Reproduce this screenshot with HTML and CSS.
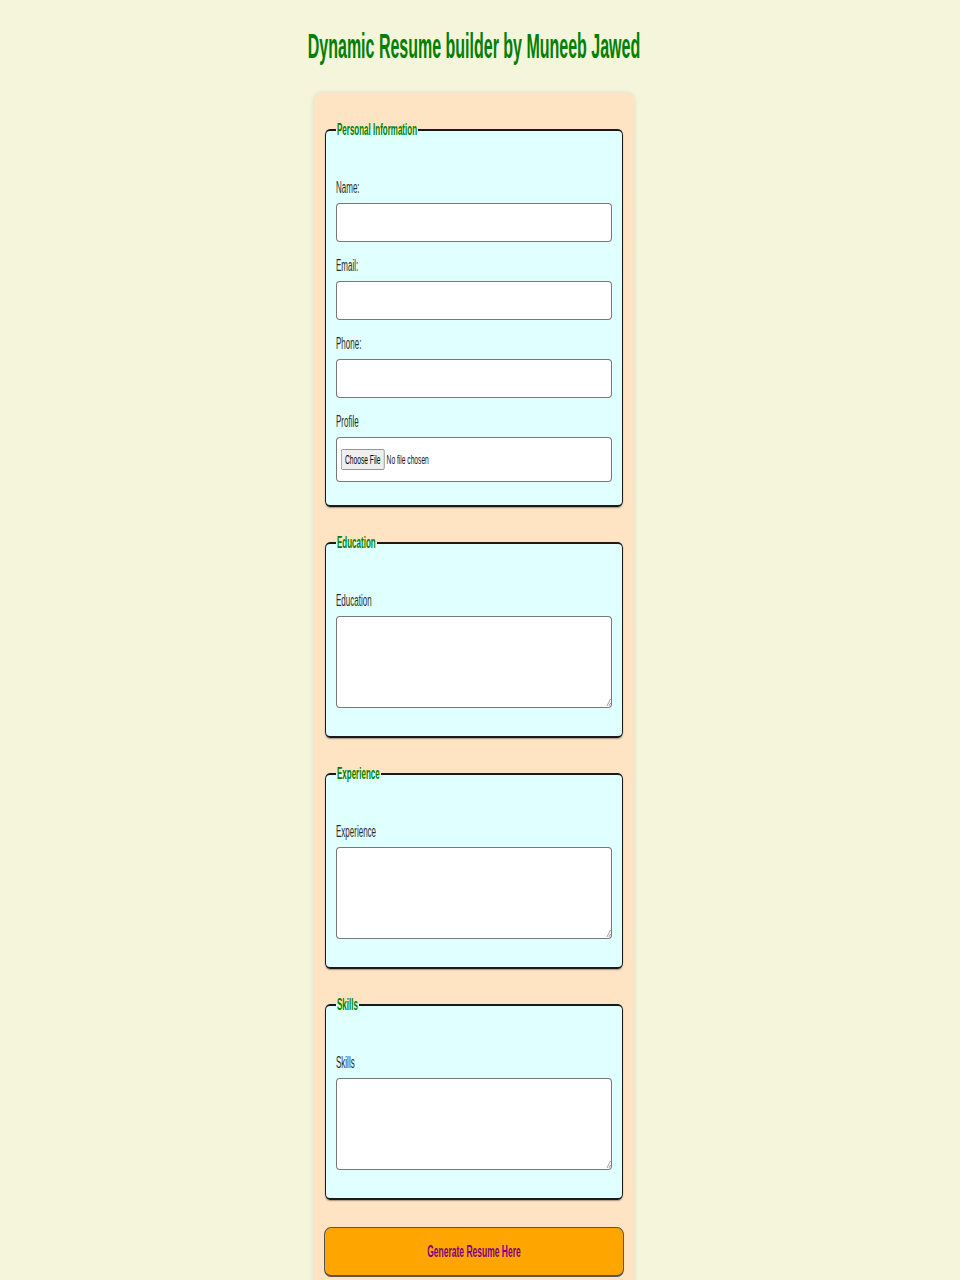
FILE: index.html
```html
<!DOCTYPE html>
<html lang="en">
<head>
<meta charset="utf-8">
<title>Dynamic Resume Builder</title>
<link rel="stylesheet" href="styles.css">
</head>
<body>
<div class="page">
  <h1 class="title">Dynamic Resume builder by Muneeb Jawed</h1>
  <form class="card">
    <fieldset class="section">
      <legend class="section-title">Personal Information</legend>
      <label class="field-label" for="name">Name:</label>
      <input class="field-input" type="text" id="name">
      <label class="field-label" for="email">Email:</label>
      <input class="field-input" type="email" id="email">
      <label class="field-label" for="phone">Phone:</label>
      <input class="field-input" type="tel" id="phone">
      <label class="field-label" for="profile">Profile</label>
      <input class="field-file" type="file" id="profile">
    </fieldset>
    <fieldset class="section">
      <legend class="section-title">Education</legend>
      <label class="field-label" for="education">Education</label>
      <textarea class="field-area" id="education"></textarea>
    </fieldset>
    <fieldset class="section">
      <legend class="section-title">Experience</legend>
      <label class="field-label" for="experience">Experience</label>
      <textarea class="field-area" id="experience"></textarea>
    </fieldset>
    <fieldset class="section">
      <legend class="section-title">Skills</legend>
      <label class="field-label" for="skills">Skills</label>
      <textarea class="field-area" id="skills"></textarea>
    </fieldset>
    <button class="submit" type="button">Generate Resume Here</button>
  </form>
</div>
</body>
</html>
```

FILE: styles.css
```css
html {
  background: #f5f5dc;
}

body {
  margin: 0;
  background: #f5f5dc;
}

/* The page is laid out at natural width and squeezed horizontally around its centre */
.page {
  width: 948px;
  box-sizing: border-box;
  padding: 26px 0 131px;
  transform: scaleX(0.5);
  transform-origin: 50% 0;
  font-family: "Liberation Sans", Arial, sans-serif;
  color: #333;
}

.title {
  margin: 0 0 27px;
  font-size: 35px;
  line-height: 40px;
  font-weight: bold;
  text-align: center;
  color: #008000;
  transform: scaleX(0.914);
}

.card {
  width: 640px;
  box-sizing: border-box;
  margin: 0 auto;
  padding: 28px 20px 20px;
  background: #ffe4c4;
  border-radius: 14px / 8px;
  box-shadow: 0 0 8px rgba(0, 0, 0, 0.12);
}

.section {
  margin: 0 2px 27px;
  padding: 40px 20px 23px;
  background: #e0ffff;
  border: 2px solid #1a1a1a;
  border-radius: 10px / 6px;
  box-shadow: 0 1px 2px rgba(0, 0, 0, 0.35);
}

.section-title {
  padding: 0 2px;
  font-size: 16px;
  font-weight: bold;
  color: #008000;
}

.field-label {
  display: block;
  margin-bottom: 6px;
  font-size: 16px;
  color: #2b2b2b;
}

.field-input,
.field-file,
.field-area {
  display: block;
  width: 100%;
  box-sizing: border-box;
  background: #fff;
  border-style: solid;
  border-color: #777;
  border-width: 1px 2px;
  border-radius: 8px / 4px;
  font-family: "Liberation Sans", Arial, sans-serif;
}

.field-input {
  height: 39px;
  margin-bottom: 15px;
  padding: 0 10px;
  font-size: 16px;
}

.field-file {
  height: 45px;
  padding: 11px 8px;
  font-size: 13.333px;
  color: #111;
}

.field-file::file-selector-button {
  font-family: "Liberation Sans", Arial, sans-serif;
  font-size: 13.333px;
}

.field-area {
  height: 92px;
  margin-bottom: 5px;
  padding: 8px 10px;
  font-size: 16px;
  resize: vertical;
}

.submit {
  display: block;
  width: 100%;
  height: 50px;
  margin: 0;
  background: #ffa500;
  border-style: solid;
  border-color: #555;
  border-width: 1px 2px 2px;
  border-radius: 14px / 8px;
  font-family: "Liberation Sans", Arial, sans-serif;
  font-size: 17px;
  font-weight: bold;
  color: #800080;
  cursor: pointer;
}
```
